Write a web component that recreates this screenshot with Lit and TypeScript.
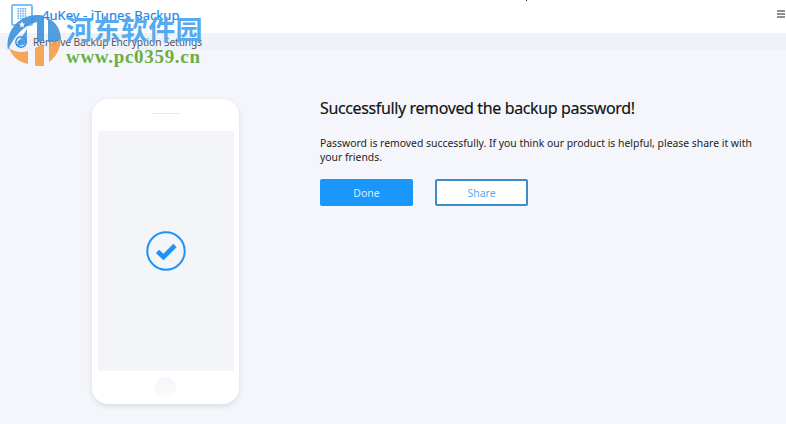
import { LitElement, html, css, svg } from 'lit';
import { customElement } from 'lit/decorators.js';

@customElement('app-root')
export class AppRoot extends LitElement {
  static styles = css`
    :host {
      display: block;
      position: relative;
      width: 786px;
      height: 424px;
      overflow: hidden;
      background: #f4f6fb;
      font-family: 'Noto Sans', sans-serif;
      color: #222;
    }

    .header {
      height: 33px;
      box-sizing: border-box;
      background: #fff;
      display: flex;
      align-items: flex-start;
      padding: 4px 1px 0 11px;
    }

    .logo-box {
      width: 22px;
      height: 22px;
      box-sizing: border-box;
      border: 2px solid #7fbff5;
      border-radius: 2px;
      display: flex;
      justify-content: center;
      padding-top: 2px;
      margin-right: 9px;
    }

    .app-title {
      font-size: 13px;
      line-height: 22px;
      color: #1d86e5;
      flex: 1;
      letter-spacing: 0.07px;
      -webkit-text-stroke: 0.2px #1d86e5;
    }

    .menu {
      width: 8px;
      display: flex;
      flex-direction: column;
      gap: 1px;
      margin-top: 6px;
    }

    .menu i {
      display: block;
      height: 2px;
      background: #8f8f8f;
    }

    .crumb {
      height: 17px;
      background: #eff2f9;
      display: flex;
      align-items: center;
      padding-left: 14px;
      gap: 5px;
      font-size: 10.2px;
      color: #555;
      letter-spacing: -0.08px;
    }

    .main {
      display: flex;
      padding-top: 48px;
      padding-left: 92px;
    }

    .phone {
      width: 147px;
      height: 305px;
      margin-top: 1px;
      box-sizing: border-box;
      background: #fff;
      border-radius: 16px;
      box-shadow: 0 2px 5px rgba(150, 160, 180, 0.3);
      display: flex;
      flex-direction: column;
      align-items: center;
      padding: 14px 5.5px 0;
    }

    .speaker {
      width: 28px;
      height: 1px;
      background: #e6e8ee;
      margin-bottom: 17px;
    }

    .screen {
      width: 136px;
      height: 240px;
      background: #f4f5f9;
      display: flex;
      align-items: center;
      justify-content: center;
    }

    .check {
      margin-left: 1px;
    }

    .home {
      width: 21px;
      height: 21px;
      margin-top: 6px;
      border-radius: 50%;
      background: linear-gradient(#f4f5f8, #fbfbfc);
    }

    .content {
      margin-left: 81px;
      width: 440px;
    }

    h1 {
      font-size: 16px;
      font-weight: 400;
      margin: 0;
      line-height: 20px;
      letter-spacing: -0.37px;
      color: #111;
      -webkit-text-stroke: 0.15px #111;
    }

    p {
      font-size: 10.4px;
      line-height: 14px;
      margin: 18px 0 0;
      color: #222;
    }

    .actions {
      display: flex;
      gap: 22px;
      margin-top: 15px;
    }

    button {
      width: 93px;
      height: 27px;
      box-sizing: border-box;
      border-radius: 2px;
      font: inherit;
      font-size: 10.5px;
      padding: 0;
    }

    .done {
      background: #1b96fb;
      border: none;
      color: #d6ecff;
    }

    .share {
      background: #fff;
      border: 2px solid #3a8ccb;
      color: #5aa9ef;
    }

    .tick {
      position: absolute;
      left: 526px;
      top: 0;
      width: 1px;
      height: 1px;
      background: #222;
    }

    .watermark {
      position: absolute;
      left: 4px;
      top: 10px;
      pointer-events: none;
    }

    .wm-cn {
      position: absolute;
      left: 66px;
      top: 13px;
      font-family: 'Noto Sans CJK SC', sans-serif;
      font-size: 27px;
      line-height: 32px;
      font-weight: 700;
      letter-spacing: 0.4px;
      color: #55aaf0;
      white-space: nowrap;
      pointer-events: none;
    }

    .wm-url {
      position: absolute;
      left: 66px;
      top: 47px;
      font-family: 'Liberation Serif', serif;
      font-size: 19px;
      line-height: 20px;
      font-weight: 700;
      letter-spacing: 0.7px;
      color: #6cae45;
      white-space: nowrap;
      pointer-events: none;
    }
  `;

  private logoDots() {
    const dots = [];
    for (let y = 0; y < 5; y++) {
      for (let x = 0; x < 4; x++) {
        dots.push(svg`<rect x=${x * 2.4} y=${y * 2.4} width="1.5" height="1.5" fill="#5aa9ef" />`);
      }
    }
    return html`<svg width="10" height="12" viewBox="0 0 9 12">${dots}</svg>`;
  }

  render() {
    return html`
      <div class="header">
        <div class="logo-box">${this.logoDots()}</div>
        <div class="app-title">4uKey - iTunes Backup</div>
        <div class="menu"><i></i><i></i><i></i></div>
      </div>
      <div class="crumb">
        <svg width="14" height="12" viewBox="0 0 14 12">
          <circle cx="7" cy="6" r="5.2" fill="none" stroke="#2a8ce8" stroke-width="1.4" />
          <path d="M10 6 H4.5 M6.5 3.8 L4.2 6 L6.5 8.2" fill="none" stroke="#2a8ce8" stroke-width="1.2" />
        </svg>
        <span>Remove Backup Encryption Settings</span>
      </div>
      <div class="main">
        <div class="phone">
          <div class="speaker"></div>
          <div class="screen">
            <svg class="check" width="40" height="40" viewBox="0 0 40 40">
              <circle cx="20" cy="20" r="18.7" fill="none" stroke="#1f93f5" stroke-width="2" />
              <path d="M11.5 20.5 L17.5 26 L29 14.5" fill="none" stroke="#1f93f5" stroke-width="4.6" />
            </svg>
          </div>
          <div class="home"></div>
        </div>
        <div class="content">
          <h1>Successfully removed the backup password!</h1>
          <p>Password is removed successfully. If you think our product is helpful, please share it with your friends.</p>
          <div class="actions">
            <button class="done">Done</button>
            <button class="share">Share</button>
          </div>
        </div>
      </div>
      <div class="tick"></div>
      <svg class="watermark" width="62" height="60" viewBox="0 0 62 60">
        <path d="M4 40 C1 22 14 5 33 5 L33 12 C20 15 10 26 4 40 Z" fill="#3f93dc" opacity="0.92" />
        <path d="M23 19 L12 36 C16 36 21 35 23 33 Z" fill="#3f93dc" opacity="0.85" />
        <path d="M33 5 C36 5 38 5 40 6 V30 L33 33 Z" fill="#3f93dc" opacity="0.92" />
        <path d="M44 8 C52 12 57 20 57 30 C53 32 48 32 44 32 Z" fill="#3f93dc" opacity="0.9" />
        <path d="M5 38 C10 42 18 43 24 41 V54 C14 52 8 46 5 38 Z" fill="#f2a24e" opacity="0.95" />
        <path d="M31 38 L40 34 V56 H31 Z" fill="#f2a24e" opacity="0.95" />
        <path d="M45 33 C49 33 53 32 57 30 C56 40 51 48 45 52 Z" fill="#f2a24e" opacity="0.95" />
        <path d="M18 11.5 L19 13.6 L21 13.8 L19.4 15.2 L20 17.4 L18 16.2 L16 17.4 L16.6 15.2 L15 13.8 L17 13.6 Z" fill="#fff" />
      </svg>
      <div class="wm-cn">河东软件园</div>
      <div class="wm-url">www.pc0359.cn</div>
    `;
  }
}
